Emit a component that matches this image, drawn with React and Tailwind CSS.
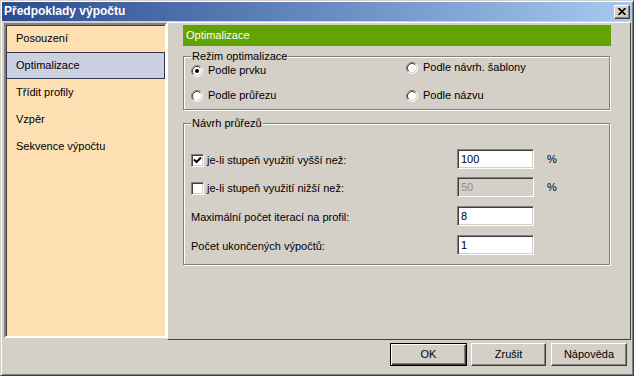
import React from 'react';

const NAV_ITEMS = ['Posouzení', 'Optimalizace', 'Třídit profily', 'Vzpěr', 'Sekvence výpočtu'];

function Radio({ checked }) {
    return (
        <svg width="12" height="12" viewBox="0 0 12 12" className="shrink-0">
            <circle cx="6" cy="6" r="5" fill="#fff" />
            <path d="M2.11 9.89 A5.5 5.5 0 0 1 9.89 2.11" fill="none" stroke="#808080" />
            <path d="M9.89 2.11 A5.5 5.5 0 0 1 2.11 9.89" fill="none" stroke="#fff" />
            <path d="M2.82 9.18 A4.5 4.5 0 0 1 9.18 2.82" fill="none" stroke="#404040" />
            <path d="M9.18 2.82 A4.5 4.5 0 0 1 2.82 9.18" fill="none" stroke="#d4d0c8" />
            {checked ? <circle cx="6" cy="6" r="2" fill="#000" /> : null}
        </svg>
    );
}

function Checkbox({ checked }) {
    return (
        <div className="w-[13px] h-[13px] shrink-0 bg-white border border-t-[#808080] border-l-[#808080] border-r-white border-b-white shadow-[inset_1px_1px_0_#404040,inset_-1px_-1px_0_#d4d0c8] flex items-center justify-center">
            {checked ? (
                <svg width="9" height="9" viewBox="0 0 9 9">
                    <path d="M1 3.5 L3.5 6 L8 1.5" fill="none" stroke="#000" strokeWidth="2" />
                </svg>
            ) : null}
        </div>
    );
}

function TextBox({ value, disabled }) {
    return (
        <div
            className={`w-[77px] h-[20px] border border-t-[#808080] border-l-[#808080] border-r-white border-b-white shadow-[inset_1px_1px_0_#404040,inset_-1px_-1px_0_#d4d0c8] flex items-center pl-[3px] ${disabled ? 'bg-[#d4d0c8] text-[#8c8c8c]' : 'bg-white text-black'}`}
        >
            {value}
        </div>
    );
}

function Button({ label, primary, width }) {
    if (primary) {
        return (
            <div className={`${width} h-[23px] border border-black flex items-center justify-center shadow-[inset_1px_1px_0_#fff,inset_-1px_-1px_0_#404040,inset_-2px_-2px_0_#808080]`}>
                {label}
            </div>
        );
    }
    return (
        <div className={`${width} h-[23px] border border-t-white border-l-white border-r-[#404040] border-b-[#404040] shadow-[inset_-1px_-1px_0_#808080] flex items-center justify-center`}>
            {label}
        </div>
    );
}

function GroupBox({ title, className, children }) {
    return (
        <div className={`relative border border-[#808080] shadow-[inset_1px_1px_0_#fff,1px_1px_0_#fff] ${className}`}>
            <span className="absolute -top-[7px] left-[7px] px-[1px] bg-[#d4d0c8] leading-[13px]">{title}</span>
            {children}
        </div>
    );
}

function Row({ label, check, value, disabled, percent, first }) {
    return (
        <div className={`flex items-center h-[20px] ${first}`}>
            <div className="w-[266px] flex items-center gap-[3px] pt-[2px]">
                {check !== undefined ? <Checkbox checked={check} /> : null}
                <span>{label}</span>
            </div>
            <TextBox value={value} disabled={disabled} />
            {percent ? <span className="ml-[13px] pt-[1px]">%</span> : null}
        </div>
    );
}

export default function App() {
    return (
        <div className="w-[634px] h-[376px] overflow-hidden bg-[#d4d0c8] border border-t-[#d4d0c8] border-l-[#d4d0c8] border-r-[#404040] border-b-[#404040] shadow-[inset_1px_1px_0_#fff,inset_-1px_-1px_0_#808080] flex flex-col font-['Liberation_Sans',Arial,sans-serif] text-[11px] leading-[13px] text-black">
            <div className="mx-[1px] mt-[1px] h-[19px] flex items-center justify-between pl-[2px] pr-[2px] bg-gradient-to-r from-[#2c4c90] to-[#a6caf0]">
                <span className="text-white font-bold text-[12px]">Předpoklady výpočtu</span>
                <div className="w-[16px] h-[14px] bg-[#d4d0c8] border border-t-white border-l-white border-r-[#404040] border-b-[#404040] shadow-[inset_-1px_-1px_0_#808080] flex items-center justify-center">
                    <svg width="8" height="7" viewBox="0 0 8 7">
                        <path d="M0.5 0 L7.5 7 M7.5 0 L0.5 7" stroke="#000" strokeWidth="1.6" />
                    </svg>
                </div>
            </div>

            <div className="flex mt-[1px] pl-[3px]">
                <div className="mt-[1px] w-[163px] h-[315px] bg-[#fedfb1] border-2 border-t-[#808080] border-l-[#808080] border-r-white border-b-white shadow-[inset_1px_1px_0_#404040]">
                    {NAV_ITEMS.map((item) => (
                        item === 'Optimalizace' ? (
                            <div key={item} className="h-[27px] flex items-center pl-[9px] bg-[#cbd0e2] border border-[#34344a]">
                                {item}
                            </div>
                        ) : (
                            <div key={item} className="h-[27px] flex items-center pl-[10px]">
                                {item}
                            </div>
                        )
                    ))}
                </div>

                <div className="w-[464px] h-[318px] border border-t-white border-l-white border-r-[#404040] border-b-[#404040] pl-[15px] pt-[2px]">
                    <div className="w-[428px] h-[21px] bg-[#63a301] text-white flex items-center pl-[3px]">
                        Optimalizace
                    </div>

                    <GroupBox title="Režim optimalizace" className="mt-[10px] w-[427px] h-[54px]">
                        <div className="flex pl-[7px]">
                            <div className="w-[215px] flex flex-col pt-[7px] gap-[12px]">
                                <div className="flex items-center gap-[5px] h-[13px]">
                                    <Radio checked />
                                    <span>Podle prvku</span>
                                </div>
                                <div className="flex items-center gap-[5px] h-[13px]">
                                    <Radio />
                                    <span>Podle průřezu</span>
                                </div>
                            </div>
                            <div className="flex flex-col pt-[4px] gap-[15px]">
                                <div className="flex items-center gap-[5px] h-[13px]">
                                    <Radio />
                                    <span>Podle návrh. šablony</span>
                                </div>
                                <div className="flex items-center gap-[5px] h-[13px]">
                                    <Radio />
                                    <span>Podle názvu</span>
                                </div>
                            </div>
                        </div>
                    </GroupBox>

                    <GroupBox title="Návrh průřezů" className="mt-[13px] w-[427px] h-[142px]">
                        <div className="flex flex-col pl-[7px]">
                            <Row first="mt-[25px]" check label="je-li stupeň využití vyšší než:" value="100" percent />
                            <Row first="mt-[8px]" check={false} label="je-li stupeň využití nižší než:" value="50" disabled percent />
                            <Row first="mt-[9px]" label="Maximální počet iterací na profil:" value="8" />
                            <Row first="mt-[9px]" label="Počet ukončených výpočtů:" value="1" />
                        </div>
                    </GroupBox>
                </div>
            </div>

            <div className="flex justify-end mt-[3px] pr-[6px]">
                <Button label="OK" primary width="w-[77px]" />
                <div className="w-[4px]" />
                <Button label="Zrušit" width="w-[75px]" />
                <div className="w-[5px]" />
                <Button label="Nápověda" width="w-[76px]" />
            </div>
        </div>
    );
}
